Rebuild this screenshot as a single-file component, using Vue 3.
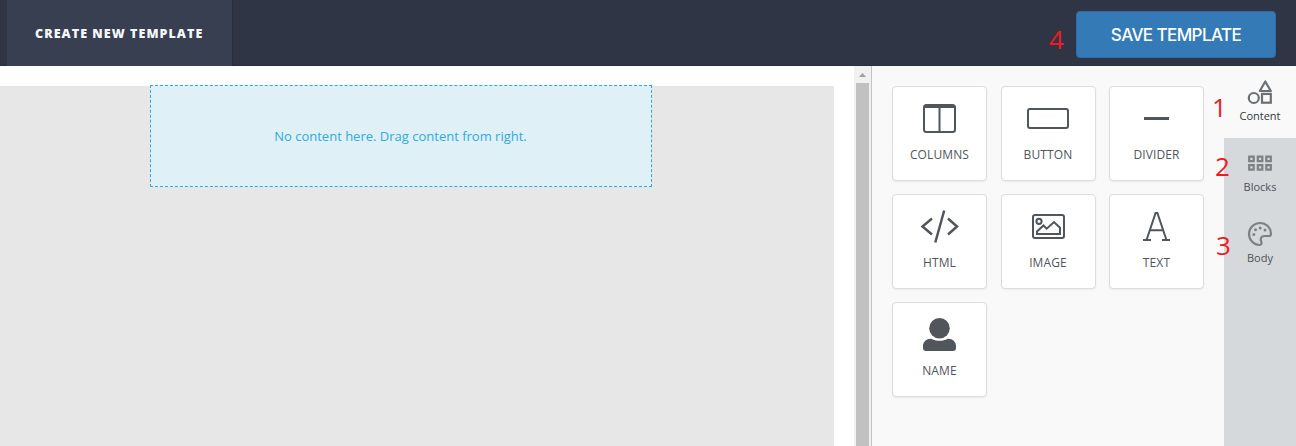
<script setup>
const tools = [
  { id: 'columns', label: 'COLUMNS' },
  { id: 'button', label: 'BUTTON' },
  { id: 'divider', label: 'DIVIDER' },
  { id: 'html', label: 'HTML' },
  { id: 'image', label: 'IMAGE' },
  { id: 'text', label: 'TEXT' },
  { id: 'name', label: 'NAME' },
]
</script>

<template>
  <div class="page">
    <header class="header">
      <div class="tab"><span>CREATE NEW TEMPLATE</span></div>
      <button class="save"><span>SAVE TEMPLATE</span></button>
    </header>
    <main class="main">
      <section class="stage">
        <div class="canvas">
          <div class="drop">No content here. Drag content from right.</div>
        </div>
      </section>
      <div class="scrollbar">
        <svg width="17" height="17" viewBox="0 0 17 17"><path d="M5 11L8.500 7L12 11Z" fill="#a0a0a0" /></svg>
        <div class="thumb"></div>
      </div>
      <aside class="panel">
        <div class="grid">
          <div v-for="t in tools" :key="t.id" class="card" :class="t.id">
            <svg class="glyph" width="48" height="40" viewBox="0 0 48 40" fill="none" stroke="#50565b" stroke-width="2">
              <template v-if="t.id === 'columns'">
                <rect x="9" y="7" width="31" height="27" rx="2.5" />
                <path d="M9 8.500h31" stroke-width="3" />
                <path d="M24.500 9v24" />
              </template>
              <rect v-else-if="t.id === 'button'" x="4" y="11" width="40" height="19" rx="2" />
              <path v-else-if="t.id === 'divider'" d="M12 20.500h25" stroke-width="3" />
              <path v-else-if="t.id === 'html'" d="M17 12.500L7.500 20.500L17 28.500M33 12.500L42 20.500L33 28.500M29.200 4.500L20.300 36.500" stroke-width="2.500" />
              <template v-else-if="t.id === 'image'">
                <rect x="9" y="9" width="31" height="23" rx="2" />
                <circle cx="15" cy="15.300" r="2.600" />
                <path d="M13 28v-2.500l6.500-6l3.200 3.200L30 16l6 5.700V28Z" />
              </template>
              <path v-else-if="t.id === 'text'" d="M14.700 33.500L23.600 7h1.800L34.300 33.500M18 24.200h13M11 34h8M30 34h8" />
              <g v-else fill="#50565b" stroke="none">
                <circle cx="24.500" cy="14.300" r="10.300" />
                <path d="M15.500 24.700c2 0 3 2 9 2s7-2 9-2c4 0 7.500 3.300 7.500 7V34a3 3 0 0 1-3 3H11a3 3 0 0 1-3-3v-2.300c0-3.700 3.500-7 7.500-7Z" />
              </g>
            </svg>
            <span class="label">{{ t.label }}</span>
          </div>
        </div>
      </aside>
      <nav class="rail">
        <div class="item active">
          <svg width="26" height="26" viewBox="0 0 26 26" fill="none" stroke="#6c7073" stroke-width="2.200">
            <path d="M18.300 2.500L23.800 12H12.800Z" stroke-linejoin="round" />
            <circle cx="6.800" cy="19" r="5" /><rect x="15" y="14.900" width="8.800" height="8.800" />
          </svg>
          <span>Content</span>
        </div>
        <div class="item">
          <svg width="26" height="26" viewBox="0 0 26 26" fill="none" stroke="#7c8185" stroke-width="2.200">
            <path d="M2.200 6.600h4.500v4.500h-4.500ZM10.800 6.600h4.500v4.500h-4.500ZM19.300 6.600h4.500v4.500h-4.500ZM2.200 15.200h4.500v4.500h-4.500ZM10.800 15.200h4.500v4.500h-4.500ZM19.300 15.200h4.500v4.500h-4.500Z" />
          </svg>
          <span>Blocks</span>
        </div>
        <div class="item">
          <svg width="26" height="26" viewBox="0 0 26 26" fill="none" stroke="#7c8185" stroke-width="2.200">
            <path d="M13 2A11 11 0 0 0 2 13c0 6 5 11 10.500 11c2 0 2.500-1.700 1.700-3.500c-1.300-3 .3-5.500 3.300-5.500h4.500c1.400 0 2-.8 2-2.200C24 6.500 19 2 13 2Z" />
            <g fill="#7c8185" stroke="none"><circle cx="6.800" cy="13.500" r="1.500" /><circle cx="8.500" cy="8.800" r="1.500" /><circle cx="13.200" cy="7" r="1.500" /><circle cx="18" cy="9" r="1.500" /></g>
          </svg>
          <span>Body</span>
        </div>
      </nav>
    </main>
    <b class="mark one">1</b>
    <b class="mark two">2</b>
    <b class="mark three">3</b>
    <b class="mark four">4</b>
  </div>
</template>

<style>
html, body { margin: 0; overflow: hidden; }
</style>

<style scoped>
.page { position: relative; width: 1296px; height: 446px; overflow: hidden; display: flex; flex-direction: column; background: #fff; font-family: "Open Sans", sans-serif; }
.page * { box-sizing: border-box; }
.header { height: 66px; flex: none; display: flex; justify-content: space-between; background: #2f3545; border-bottom: 1px solid #292e3d; padding: 0 20px 0 7px; }
.tab { width: 226px; height: 66px; background: #383f51; border-right: 1px solid #272c39; padding: 1px 0 0 28px; line-height: 66px; font-size: 12.5px; font-weight: 800; letter-spacing: 1.05px; color: #f4f8fc; white-space: nowrap; }
.save { width: 200px; height: 47px; margin-top: 11px; padding: 1px 0 0; border: 1px solid #2e6da4; border-radius: 4px; background: #337ab7; color: #fff; font: 500 17px/44px Inter, sans-serif; letter-spacing: -.58px; white-space: nowrap; }
.main { flex: 1; display: flex; min-height: 0; }
.stage { width: 854px; padding: 20px 20px 0 0; }
.canvas { height: 100%; background: #e7e7e7; padding-left: 150px; }
.drop { width: 502px; height: 102px; position: relative; top: -1px; border: 1px dashed #2aabdf; background: #dff0f7; color: #2fabdd; font-size: 13px; line-height: 100px; text-align: center; padding-right: 1px; }
.scrollbar { width: 18px; background: #f1f1f1; border-right: 1px solid #c3c3c3; display: flex; flex-direction: column; }
.scrollbar svg { display: block; flex: none; }
.thumb { flex: 1; margin: 0 2px; background: #c1c1c1; }
.panel { width: 352px; background: #f9f9f9; padding: 20px; }
.grid { display: grid; grid-template-columns: repeat(3, 95px); gap: 13px 13.5px; }
.card { height: 95px; display: flex; flex-direction: column; align-items: center; background: #fff; border: 1px solid #ddd; border-radius: 4px; box-shadow: 0 1px 2px rgba(0, 0, 0, .06); padding-top: 11px; }
.glyph { display: block; flex: none; margin-right: 1px; }
.button .glyph, .image .glyph { margin-right: 0; }
.label { margin-top: 8px; font-size: 12px; line-height: 17px; font-weight: 500; letter-spacing: .12px; color: #50565b; white-space: nowrap; }
.rail { width: 72px; background: #d5d9dc; color: #4d5256; }
.item { height: 71px; display: flex; flex-direction: column; align-items: center; padding-top: 12px; font-size: 11px; line-height: 16px; }
.item svg { display: block; margin-bottom: 3px; }
.item.active { height: 72px; padding-top: 13px; background: #f9f9f9; color: #33373a; }
.mark { position: absolute; color: #ed1c24; font-size: 26px; line-height: 36px; font-weight: 400; }
.one { left: 1212px; top: 89px; }
.two { left: 1215px; top: 148px; }
.three { left: 1216px; top: 227px; }
.four { left: 1049px; top: 21px; }
</style>
